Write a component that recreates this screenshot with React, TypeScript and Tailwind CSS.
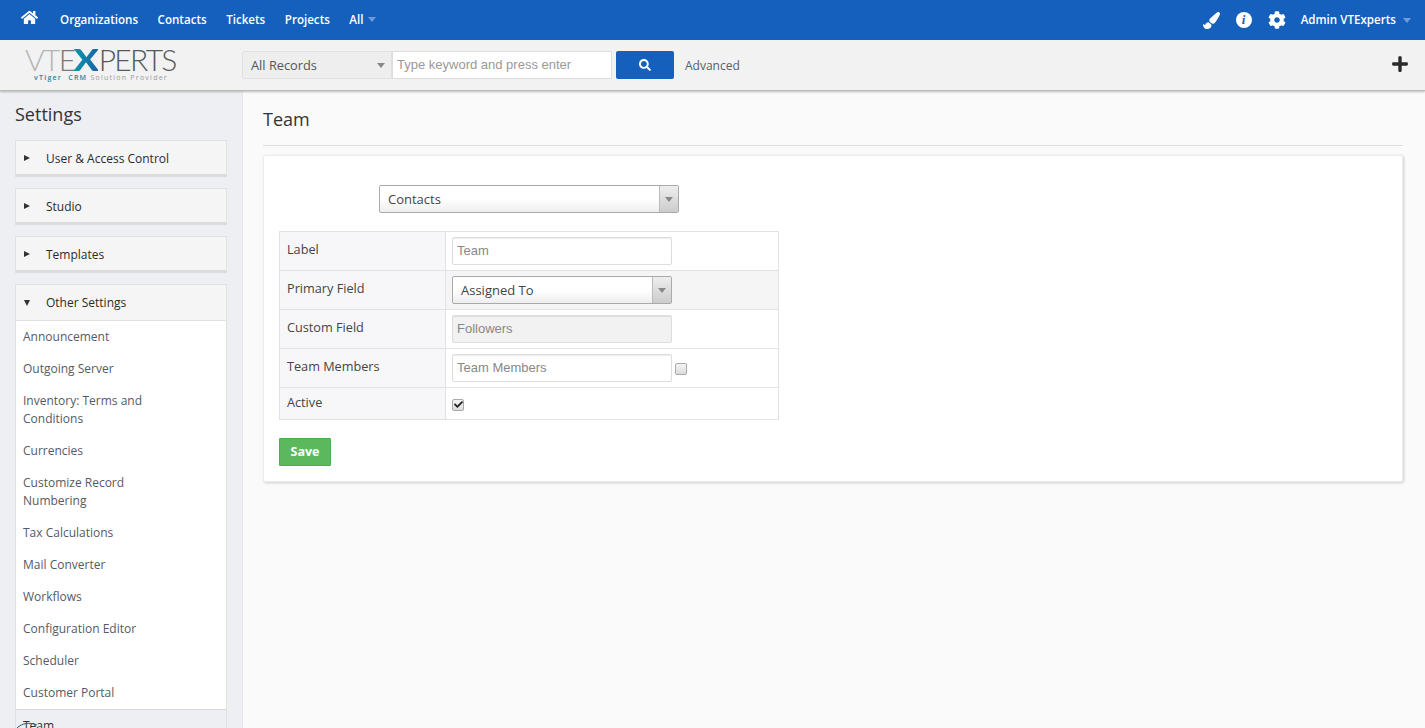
import React from "react";
import { FaHome, FaPaintBrush, FaCog, FaSearch, FaPlus, FaCheck } from "react-icons/fa";

const sans = "font-['Open_Sans',sans-serif]";
const arial = "font-['Liberation_Sans',Arial,sans-serif]";

function Caret({ className }: { className: string }) {
  return <span className={"inline-block w-0 h-0 border-x-[4px] border-x-transparent border-t-[5px] " + className} />;
}

function Panel({ label }: { label: string }) {
  return (
    <div className="h-[37px] mb-[11px] flex items-center bg-[#f5f5f5] border border-[#e1e1e1] border-b-[3px] border-b-[#dcdcdc]">
      <span className="ml-[8px] w-0 h-0 border-y-[3.5px] border-y-transparent border-l-[6px] border-l-[#333]" />
      <span className="ml-[16px] pt-[3px] text-[12px] text-[#2b2b2b]">{label}</span>
    </div>
  );
}

function Item({ children }: { children: React.ReactNode }) {
  return <div className="px-[7px] py-[7px] text-[12px] leading-[18px] text-[#555a66]">{children}</div>;
}

function SelectBox({ value, className }: { value: string; className: string }) {
  return (
    <div className={"h-[28px] flex items-stretch rounded-[2px] border border-[#aaa] bg-gradient-to-b from-white from-50% to-[#eeeeee] " + className}>
      <span className="flex-1 flex items-center pt-[2px] text-[13px] text-[#444]">{value}</span>
      <span className="w-[19px] flex items-center justify-center border-l border-[#bbb] bg-gradient-to-b from-[#eee] to-[#ccc]">
        <Caret className="border-t-[#888]" />
      </span>
    </div>
  );
}

const inputCls = "w-[220px] h-[28px] px-[4px] pb-[2px] border border-[#ddd] rounded-[2px] text-[13px] shadow-[inset_0_1px_1px_rgba(0,0,0,0.08)] outline-none " + arial;

function Row({ label, children, cellBg = "bg-white", h = "h-[39px]", pb = "pb-[2px]" }: { label: string; children: React.ReactNode; cellBg?: string; h?: string; pb?: string }) {
  return (
    <tr className={h}>
      <td className={"w-[166px] border border-[#e2e2e2] bg-[#f7f7f9] pl-[7px] text-[12.7px] text-[#444] " + pb}>{label}</td>
      <td className={"border border-[#e2e2e2] pl-[6px] " + cellBg}>{children}</td>
    </tr>
  );
}

function Check({ checked, className = "" }: { checked?: boolean; className?: string }) {
  return (
    <span className={"w-[12px] h-[12px] flex items-center justify-center rounded-[2px] border border-[#aaa] bg-gradient-to-b from-[#f4f4f4] to-[#dcdcdc] " + className}>
      {checked && <FaCheck className="w-[9px] h-[9px] text-[#222]" />}
    </span>
  );
}

const logoBit = "inline-block h-[24px] leading-[24px]";

export default function App() {
  return (
    <div className={"h-screen overflow-hidden flex flex-col bg-[#fafafa] " + sans}>
      <header className="h-[40px] shrink-0 bg-[#1560bd] flex items-center text-white text-[11.6px] font-semibold">
        <FaHome className="ml-[21px] mb-[5px] w-[17px] h-[17px]" />
        <nav className="ml-[22px] flex items-center gap-[19.5px]">
          <span>Organizations</span>
          <span>Contacts</span>
          <span>Tickets</span>
          <span>Projects</span>
          <span className="flex items-center gap-[4px]">All <Caret className="border-t-[#6f9bd8]" /></span>
        </nav>
        <div className="ml-auto flex items-center">
          <FaPaintBrush className="w-[17px] h-[17px]" />
          <span className="ml-[16px] w-[16px] h-[16px] rounded-full bg-white flex items-center justify-center text-[#1560bd] text-[13px] font-bold italic font-['Liberation_Serif',serif]">i</span>
          <FaCog className="ml-[16px] w-[18px] h-[18px]" />
          <span className="ml-[15px]">Admin VTExperts</span>
          <Caret className="ml-[7px] mr-[14px] border-t-[#6f9bd8]" />
        </div>
      </header>

      <div className="h-[51px] shrink-0 relative z-10 bg-[#f2f2f2] border-b border-[#bbb] shadow-[0_1px_2px_rgba(0,0,0,0.25)] flex items-center">
        <div className="ml-[25px] w-[217px] shrink-0 flex flex-col">
          <div className="h-[25px] pb-[3px] flex items-center text-[30px] font-light tracking-[-1.7px] font-['Lato',sans-serif]">
            <span className={logoBit + " text-[#b5b5b5]"}>VT</span>
            <span className={logoBit + " text-[#7a7a7a]"}>E</span>
            <span className={logoBit + " tracking-normal mx-[2px] scale-x-125 font-black text-transparent bg-clip-text bg-gradient-to-r from-[#0b9aa6] to-[#1b5fa8]"}>X</span>
            <span className={logoBit + " text-[#55595c]"}>PERTS</span>
          </div>
          <div className="text-[7px] leading-[9px] tracking-[1.25px] text-[#999] ml-[9px] whitespace-nowrap">
            <span className="text-[#1b8a9a] font-semibold">vTiger&nbsp; CRM</span> Solution Provider
          </div>
        </div>
        <div className="h-[28px] w-[150px] flex items-center justify-between bg-[#eeeeee] border border-[#e0e0e0] rounded-l-[2px] pl-[8px] pr-[6px] text-[12.8px] text-[#555]">
          <span className="pt-[2px]">All Records</span>
          <Caret className="border-t-[#888]" />
        </div>
        <input readOnly placeholder="Type keyword and press enter" className={"w-[220px] h-[28px] px-[4px] pb-[2px] bg-white border border-[#ddd] text-[13px] outline-none placeholder:text-[#999] " + arial} />
        <button className="ml-[4px] w-[58px] h-[28px] rounded-[2px] bg-[#1560bd] flex items-center justify-center text-white">
          <FaSearch className="w-[12px] h-[12px]" />
        </button>
        <span className="ml-[11px] pt-[1px] text-[12px] text-[#555f70]">Advanced</span>
        <FaPlus className="ml-auto mr-[16px] mb-[3px] w-[18px] h-[18px] text-[#2a2a2a]" />
      </div>

      <div className="flex-1 min-h-0 flex">
        <aside className="w-[243px] shrink-0 bg-[#eeeff3] border-r border-[#e6e6ea] pl-[15px] pr-[15px] overflow-hidden">
          <h1 className="h-[49px] pt-[10px] text-[18px] leading-[26px] text-[#333]">Settings</h1>
          <Panel label="User & Access Control" />
          <Panel label="Studio" />
          <Panel label="Templates" />
          <div className="border border-[#e1e1e1] border-b-0">
            <div className="h-[36px] flex items-center bg-[#f5f5f5] border-b border-[#e1e1e1]">
              <span className="ml-[8px] w-0 h-0 border-x-[3.5px] border-x-transparent border-t-[6px] border-t-[#333]" />
              <span className="ml-[16px] text-[12px] text-[#2b2b2b]">Other Settings</span>
            </div>
            <div className="bg-white">
              <Item>Announcement</Item>
              <Item>Outgoing Server</Item>
              <Item>Inventory: Terms and<br />Conditions</Item>
              <Item>Currencies</Item>
              <Item>Customize Record<br />Numbering</Item>
              <Item>Tax Calculations</Item>
              <Item>Mail Converter</Item>
              <Item>Workflows</Item>
              <Item>Configuration Editor</Item>
              <Item>Scheduler</Item>
              <Item>Customer Portal</Item>
            </div>
            <div className="relative border-t border-[#d8d8dc] bg-[#eeeff3] px-[7px] py-[7px] text-[12px] leading-[18px] text-[#333]">
              Team
              <svg className="absolute left-0 top-[12px] w-[24px] h-[12px]" viewBox="0 0 24 12" fill="none">
                <path d="M1 6 C6 1 14 0 21 3" stroke="#1f5f8f" strokeWidth="1" />
              </svg>
            </div>
          </div>
        </aside>

        <main className="flex-1 min-w-0 pl-[20px] pr-[22px]">
          <h2 className="h-[55px] pt-[14px] text-[18px] leading-[28px] text-[#333] border-b border-[#ddd]">Team</h2>
          <section className="mt-[9px] h-[327px] bg-white border border-[#ececec] rounded-[2px] shadow-[1px_1px_3px_rgba(0,0,0,0.18)] pt-[29px] pl-[15px]">
            <SelectBox value="Contacts" className="ml-[100px] w-[300px] pl-[8px]" />
            <table className="mt-[18px] w-[500px] border-collapse">
              <tbody>
                <Row label="Label">
                  <input readOnly value="Team" className={inputCls + " block text-[#888] bg-white"} />
                </Row>
                <Row label="Primary Field" cellBg="bg-[#f5f5f5]">
                  <SelectBox value="Assigned To" className="w-[220px] pl-[8px]" />
                </Row>
                <Row label="Custom Field">
                  <input readOnly value="Followers" className={inputCls + " block text-[#888] bg-[#f2f2f2]"} />
                </Row>
                <Row label="Team Members">
                  <div className="flex items-center gap-[3px]">
                    <input readOnly placeholder="Team Members" className={inputCls + " placeholder:text-[#888] bg-white"} />
                    <Check className="mt-[2px]" />
                  </div>
                </Row>
                <Row label="Active" h="h-[32px]" pb="pb-[1px]">
                  <Check checked className="mt-[2px]" />
                </Row>
              </tbody>
            </table>
            <button className="mt-[18px] block w-[52px] h-[28px] bg-[#5cb85c] border border-[#4cae4c] rounded-[1px] text-white text-[12.5px] font-bold">Save</button>
          </section>
        </main>
      </div>
    </div>
  );
}
